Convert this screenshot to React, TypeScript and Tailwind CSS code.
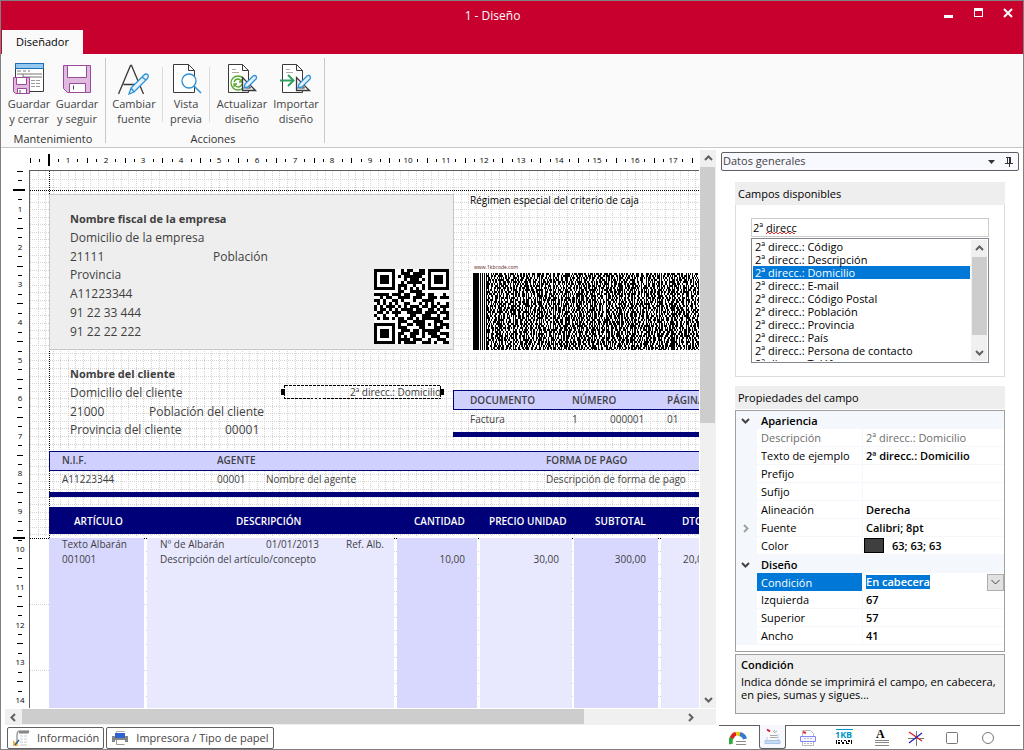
import { useLayoutEffect, useRef, useState } from 'react'
import type { ReactNode } from 'react'

// one centimetre on the design surface
const CM = 37.8

type Field = { x: number; y: number; text: string; style?: 'lg' | 'lgBold' | 'sm' | 'smBold' | 'white' | 'black'; right?: boolean }

const styles = {
  lg: 'text-[12px] leading-[18px] text-[#3f3f3f]',
  lgBold: 'text-[11px] leading-[18px] font-bold text-[#3f3f3f]',
  sm: 'text-[10px] leading-[15px] text-[#3f3f3f]',
  smBold: 'text-[10px] leading-[14px] font-semibold text-[#3f3f3f]',
  white: 'text-[10px] leading-[14px] font-semibold text-white',
  black: 'text-[10px] leading-[15px] text-black',
}

// x is the left edge (or the right edge when right is set), y the middle of the line
const fields: Field[] = [
  { x: 40, y: 47, text: 'Nombre fiscal de la empresa', style: 'lgBold' },
  { x: 40, y: 66, text: 'Domicilio de la empresa', style: 'lg' },
  { x: 40, y: 85, text: '21111', style: 'lg' },
  { x: 183, y: 85, text: 'Población', style: 'lg' },
  { x: 40, y: 103, text: 'Provincia', style: 'lg' },
  { x: 40, y: 122, text: 'A11223344', style: 'lg' },
  { x: 40, y: 141, text: '91 22 33 444', style: 'lg' },
  { x: 40, y: 160, text: '91 22 22 222', style: 'lg' },
  { x: 440, y: 30, text: 'Régimen especial del criterio de caja', style: 'black' },
  { x: 40, y: 202, text: 'Nombre del cliente', style: 'lgBold' },
  { x: 40, y: 221, text: 'Domicilio del cliente', style: 'lg' },
  { x: 40, y: 240, text: '21000', style: 'lg' },
  { x: 119, y: 240, text: 'Población del cliente', style: 'lg' },
  { x: 40, y: 258, text: 'Provincia del cliente', style: 'lg' },
  { x: 195, y: 258, text: '00001', style: 'lg' },
  { x: 440, y: 230, text: 'DOCUMENTO', style: 'smBold' },
  { x: 542, y: 230, text: 'NÚMERO', style: 'smBold' },
  { x: 637, y: 230, text: 'PÁGINA', style: 'smBold' },
  { x: 440, y: 249, text: 'Factura' },
  { x: 542, y: 249, text: '1' },
  { x: 580, y: 249, text: '000001' },
  { x: 637, y: 249, text: '01' },
  { x: 32, y: 290, text: 'N.I.F.', style: 'smBold' },
  { x: 187, y: 290, text: 'AGENTE', style: 'smBold' },
  { x: 516, y: 290, text: 'FORMA DE PAGO', style: 'smBold' },
  { x: 32, y: 309, text: 'A11223344' },
  { x: 187, y: 309, text: '00001' },
  { x: 236, y: 309, text: 'Nombre del agente' },
  { x: 516, y: 309, text: 'Descripción de forma de pago' },
  { x: 44, y: 351, text: 'ARTÍCULO', style: 'white' },
  { x: 206, y: 351, text: 'DESCRIPCIÓN', style: 'white' },
  { x: 384, y: 351, text: 'CANTIDAD', style: 'white' },
  { x: 459, y: 351, text: 'PRECIO UNIDAD', style: 'white' },
  { x: 565, y: 351, text: 'SUBTOTAL', style: 'white' },
  { x: 652, y: 351, text: 'DTO.', style: 'white' },
  { x: 32, y: 374, text: 'Texto Albarán' },
  { x: 130, y: 374, text: 'Nº de Albarán' },
  { x: 236, y: 374, text: '01/01/2013' },
  { x: 316, y: 374, text: 'Ref. Alb.' },
  { x: 32, y: 389, text: '001001' },
  { x: 130, y: 389, text: 'Descripción del artículo/concepto' },
  { x: 435, y: 389, text: '10,00', right: true },
  { x: 529, y: 389, text: '30,00', right: true },
  { x: 616, y: 389, text: '300,00', right: true },
  { x: 653, y: 389, text: '20,00' },
]

const bodyColumns = [
  { x: 19, w: 95, dark: true },
  { x: 117, w: 247, dark: false },
  { x: 367, w: 80, dark: true },
  { x: 450, w: 92, dark: false },
  { x: 544, w: 84, dark: true },
  { x: 631, w: 120, dark: false },
]

const availableFields = [
  'Código', 'Descripción', 'Domicilio', 'E-mail', 'Código Postal', 'Población',
  'Provincia', 'País', 'Persona de contacto', 'Teléfono',
]

const qrRows = [
  '1111111001011001101111111',
  '1000001001110111101000001',
  '1011101010111111001011101',
  '1011101000101110101011101',
  '1011101001011111001011101',
  '1000001011100100101000001',
  '1111111010101010101111111',
  '0000000011001111000000000',
  '1111101110110011101100010',
  '0010110011110111001110111',
  '1101001101000100111100000',
  '0101010100110001010101001',
  '1010111010101110110110111',
  '1011010101111011001101010',
  '0110101110011111011110111',
  '1001000100001100111001001',
  '0101101011011010111111011',
  '0000000011100111100011100',
  '1111111010011011101010111',
  '1000001011100001100011101',
  '1011101001110110111111000',
  '1011101011001110101110111',
  '1011101010101100100111001',
  '1000001011110111001001110',
  '1111111010111100111010011',
]

const qrPath = qrRows
  .map((row, y) => [...row].map((c, x) => (c === '1' ? `M${x * 3} ${y * 3}h3v3h-3z` : '')).join(''))
  .join('')

function buildBarcode() {
  let seed = 417
  const next = () => {
    seed = (seed + 0x6d2b79f5) | 0
    let t = Math.imul(seed ^ (seed >>> 15), 1 | seed)
    t = (t + Math.imul(t ^ (t >>> 7), 61 | t)) ^ t
    return ((t ^ (t >>> 14)) >>> 0) / 4294967296
  }
  let d = 'M0 0h6v77h-6zM7 0h1v77h-1zM9 0h1v77h-1zM11 0h1v77h-1z'
  for (let col = 0; col < 22; col++) {
    const start = 13 + Math.round(col * 13.3)
    d += `M${start} 0h1v77h-1z`
    for (let y = 0; y < 77; y += 2) {
      let x = start + 1 + Math.floor(next() * 2)
      while (x < start + 13) {
        const w = 1 + Math.floor(next() * 2.6)
        d += `M${x} ${y}h${w}v${y === 76 ? 1 : 2}h-${w}z`
        x += w + 1 + Math.floor(next() * 2)
      }
    }
  }
  return d
}

const barcodePath = buildBarcode()

function Ruler({ vertical = false }: { vertical?: boolean }) {
  const ref = useRef<SVGSVGElement>(null)
  const [length, setLength] = useState(0)

  useLayoutEffect(() => {
    const measure = () => {
      const box = ref.current?.getBoundingClientRect()
      if (box) setLength(vertical ? box.height : box.width)
    }
    measure()
    window.addEventListener('resize', measure)
    return () => window.removeEventListener('resize', measure)
  }, [vertical])

  const origin = vertical ? 1 : 29
  const big = vertical ? [20, 368] : [48]
  const marks: ReactNode[] = []
  const line = (key: string, pos: number, half: number, width = 1) =>
    vertical ? (
      <rect key={key} x={18 - half} y={pos} width={half * 2 + (half < 6 ? 1 : 0)} height={width} />
    ) : (
      <rect key={key} x={pos} y={12 - half} width={width} height={half * 2} />
    )
  for (let i = 0; origin + (i * CM) / 4 < length - 5; i++) {
    const pos = Math.round(origin + (i * CM) / 4)
    if (big.some((b) => Math.abs(b - pos) < 2)) continue
    if (i % 4 === 0 && i > 0) {
      marks.push(
        <text key={i} x={vertical ? 19 : pos} y={vertical ? pos + 3 : 15} textAnchor="middle" className="text-[8px]">
          {i / 4}
        </text>,
      )
    } else if (i % 2 === 0) {
      marks.push(line(`m${i}`, pos, 2.5))
    } else {
      marks.push(line(`s${i}`, pos, 1.5))
    }
  }
  return (
    <svg ref={ref} className={vertical ? 'h-full w-7 shrink-0' : 'h-[22px] w-full'} shapeRendering="crispEdges" aria-hidden="true">
      {marks}
      {big.map((b) => line(`b${b}`, b - 1, 6, 2))}
    </svg>
  )
}

function Grid() {
  return (
    <svg className="absolute inset-0 h-full w-full" shapeRendering="crispEdges" aria-hidden="true">
      <rect width="100%" height="100%" fill="#fff" />
      {Array.from({ length: 140 }, (_, i) => Math.round(i * 7.56)).map((x) => (
        <path key={x} d={`M${x + 0.5} 0V366`} stroke="#d4d4d4" strokeDasharray="1 1" />
      ))}
      {Array.from({ length: 48 }, (_, i) => Math.round(i * 7.56) + 8).map((y) => (
        <path key={y} d={`M0 ${y + 0.5}H2000`} stroke="#d4d4d4" strokeDasharray="1 1" />
      ))}
      <rect y="367" width="100%" height="1000" fill="#fff" />
      {Array.from({ length: 40 }, (_, i) => 367 + Math.round(i * 13.2)).map((y, i) => (
        <path key={y} d={`M${i % 5 === 0 ? 0 : 116} ${y + 0.5}H2000`} stroke="#d4d4d4" strokeDasharray="1 1" />
      ))}
      <path d="M0 19.5H2000M19.5 0V367M0 367.5H2000" stroke="#000" strokeDasharray="1 1" />
    </svg>
  )
}

function Chevron({ dir, className = '' }: { dir: 'up' | 'down' | 'left' | 'right'; className?: string }) {
  const d = { up: 'M1 6l3.5-3.5L8 6', down: 'M1 3l3.5 3.5L8 3', left: 'M6 1L2.5 4.5 6 8', right: 'M3 1l3.5 3.5L3 8' }[dir]
  return (
    <svg width="9" height="9" viewBox="0 0 9 9" fill="none" stroke="currentColor" strokeWidth="2" className={className} aria-hidden="true">
      <path d={d} />
    </svg>
  )
}

function SaveCloseIcon() {
  return (
    <svg width="32" height="32" viewBox="0 0 32 32" aria-hidden="true">
      <path d="M2.5 .5h28v28h-28z" fill="#fff" stroke="#3a3a3a" />
      <path d="M2.5 .5h28v5h-28z" fill="#94c8f0" stroke="#1a6fb5" />
      <path d="M4 8h4M10 8h3M15 8h2M4 11h25M10 11v3h19" fill="none" stroke="#777" />
      <path d="M18 17.5h4m1 0h4M18 20.5h4m1 0h4M18 23.5h4m1 0h4" stroke="#999" />
      <path d="M.5 14.5h16v16h-14l-2-2z" fill="#dfbade" stroke="#9b4a9b" />
      <path d="M3.5 14.5h10v7h-10zM4.5 25.5h9v5h-9z" fill="#fff" stroke="#9b4a9b" />
      <path d="M7 27v3" stroke="#555" />
    </svg>
  )
}

function SaveIcon() {
  return (
    <svg width="32" height="32" viewBox="0 0 32 32" aria-hidden="true">
      <path d="M2.5 2.5h27v27h-23l-4-4z" fill="#dfbade" stroke="#9b4a9b" />
      <path d="M6.5 2.5h19v12h-19zM8.5 20.5h16v9h-16z" fill="#fff" stroke="#9b4a9b" />
      <path d="M12.5 22.5v4" stroke="#444" />
    </svg>
  )
}

function FontIcon() {
  return (
    <svg width="32" height="32" viewBox="0 0 32 32" fill="none" aria-hidden="true">
      <path d="M.5 31L12.5 2.5h1L25.500 31M5.500 21.500h15" stroke="#3a3a3a" strokeWidth="1.300" />
      <path d="M11 31l2-6L26 12q2-2 4 0 1 2-1 4L16 29zM13 25l3 4M24 14l4 3" fill="#e2f1fc" stroke="#2f8fd3" strokeWidth="1.300" />
    </svg>
  )
}

function PreviewIcon() {
  return (
    <svg width="32" height="32" viewBox="0 0 32 32" fill="none" aria-hidden="true">
      <path d="M3.5 1.5h15l6 6v22h-21zM18.5 1.5v6h6" fill="#fff" stroke="#3a3a3a" />
      <circle cx="19" cy="18" r="7" fill="#fff" stroke="#2f8fd3" strokeWidth="1.300" />
      <path d="M24 23l7 7" stroke="#2f8fd3" strokeWidth="1.500" />
    </svg>
  )
}

function DesignPageIcon({ children }: { children: ReactNode }) {
  return (
    <svg width="32" height="32" viewBox="0 0 32 32" fill="none" aria-hidden="true">
      <path d="M2.5 1.5h14l6 6v22h-20zM16.5 1.5v6h6" fill="#fff" stroke="#3a3a3a" />
      <path d="M6 6.5h4M6 9.5h7" stroke="#aaa" />
      {children}
      <path d="M16.5 14.5v13h13z" fill="#f5f5f5" stroke="#3a3a3a" strokeWidth="1.300" />
      <path d="M19.5 20v5h5z" fill="#fff" stroke="#3a3a3a" />
      <path d="M18 25l1-4 8-8q2-1 3 0 1 2 0 3l-8 8z" fill="#e2f1fc" stroke="#2f8fd3" strokeWidth="1.300" />
    </svg>
  )
}

function RibbonButton({ icon, lines, className }: { icon: ReactNode; lines: [string, string]; className: string }) {
  return (
    <button type="button" className={`flex flex-col items-center leading-[15px] text-[#444] hover:bg-[#e8e8e8] ${className}`}>
      {icon}
      <span className="mt-px whitespace-nowrap">{lines[0]}</span>
      <span className="whitespace-nowrap">{lines[1]}</span>
    </button>
  )
}

function Ribbon() {
  return (
    <div className="flex h-[94px] shrink-0 border-b border-[#c8c8c8] bg-[#fafafa] pt-1 text-[11px] text-[#333]">
      <section className="flex flex-col justify-between pt-[5px] pr-1 pl-1">
        <div className="flex">
          <RibbonButton className="w-12" icon={<SaveCloseIcon />} lines={['Guardar', 'y cerrar']} />
          <RibbonButton className="w-12" icon={<SaveIcon />} lines={['Guardar', 'y seguir']} />
        </div>
        <h2 className="text-center leading-[16px]">Mantenimiento</h2>
      </section>
      <div className="mb-1 w-px bg-[#c8c8c8]" />
      <section className="flex flex-col justify-between pt-[5px] pr-1">
        <div className="flex">
          <RibbonButton className="w-14" icon={<FontIcon />} lines={['Cambiar', 'fuente']} />
          <div className="my-1 w-px bg-[#dcdcdc]" />
          <RibbonButton className="w-[46px]" icon={<PreviewIcon />} lines={['Vista', 'previa']} />
          <div className="my-1 w-px bg-[#dcdcdc]" />
          <RibbonButton
            className="ml-[2px] w-[60px]"
            icon={
              <DesignPageIcon>
                <circle cx="12" cy="20" r="7" fill="#fff" stroke="#55a82a" strokeWidth="1.300" />
                <path d="M8 19q1-3 4-3 2 0 3 2m1-2v3h-3M16 21q-1 3-4 3-2 0-3-2m-1 2v-3h3" stroke="#55a82a" strokeWidth="1.300" />
              </DesignPageIcon>
            }
            lines={['Actualizar', 'diseño']}
          />
          <RibbonButton
            className="w-12"
            icon={
              <DesignPageIcon>
                <path d="M0 17.5h13" stroke="#2fa060" strokeWidth="2" />
                <path d="M8 12l5.5 5.5L8 23" stroke="#2fa060" strokeWidth="2" />
              </DesignPageIcon>
            }
            lines={['Importar', 'diseño']}
          />
        </div>
        <h2 className="text-center leading-[16px]">Acciones</h2>
      </section>
      <div className="mb-1 w-px bg-[#c8c8c8]" />
    </div>
  )
}

function DesignSurface() {
  return (
    <div className="relative min-w-0 flex-1 overflow-hidden border-t border-l border-[#606060]">
      <Grid />
      <div className="absolute top-[23px] left-[19px] h-[156px] w-[405px] border border-[#c8c8c8] bg-[#eee]" />
      <svg className="absolute top-[98px] left-[344px]" width="75" height="75" shapeRendering="crispEdges" role="img" aria-label="QR">
        <path d="M0 0h75v75H0z" fill="#fff" />
        <path d={qrPath} />
      </svg>
      <div className="absolute top-[90px] right-0 left-[441px] h-[91px] bg-white" />
      <svg className="absolute top-[102px] left-[443px]" width="300" height="77" shapeRendering="crispEdges" role="img" aria-label="PDF417">
        <path d={barcodePath} />
      </svg>
      <span className="absolute top-[92px] left-[444px] text-[5px] leading-[8px] text-[#602020]">www.1kbcode.com</span>

      <div className="absolute top-[219px] right-[-2px] left-[423px] h-5 border border-[#000078] bg-[#d0d0ff]" />
      <div className="absolute top-[261px] right-0 left-[423px] h-[5px] bg-[#000078]" />
      <div className="absolute top-[280px] right-[-2px] left-[19px] h-5 border border-[#000078] bg-[#d0d0ff]" />
      <div className="absolute top-[321px] right-0 left-[19px] h-[5px] bg-[#000078]" />
      <div className="absolute top-[336px] right-0 left-[19px] h-[27px] bg-[#000078]" />
      {bodyColumns.map((col) => (
        <div
          key={col.x}
          className={`absolute top-[367px] bottom-0 ${col.dark ? 'bg-[#d8d8ff]' : 'bg-[#e8e8ff]'}`}
          style={{ left: col.x, width: col.w }}
        />
      ))}

      {fields.map((f) => (
        <span
          key={`${f.x}-${f.y}`}
          className={`absolute whitespace-nowrap ${styles[f.style ?? 'sm']} ${f.right ? '-translate-x-full' : ''}`}
          style={{ left: f.x, top: f.y - 8 }}
        >
          {f.text}
        </span>
      ))}

      <div className="absolute top-[214px] left-[254px] h-[14px] w-[157px] text-right text-[10px] leading-[14px] text-[#3f3f3f]">
        <svg className="absolute inset-0" width="157" height="14" shapeRendering="crispEdges" aria-hidden="true">
          <rect x=".5" y=".5" width="156" height="13" fill="none" stroke="#000" strokeDasharray="3 1" />
        </svg>
        <span className="relative">2ª direcc.: Domicilio</span>
        <i className="absolute top-[4px] -left-[3px] h-[6px] w-1 bg-black" />
        <i className="absolute top-[4px] -right-[3px] h-[6px] w-1 bg-black" />
      </div>
    </div>
  )
}

function Designer() {
  return (
    <main className="flex min-w-0 flex-1 flex-col">
      <div className="flex min-h-0 flex-1">
        <div className="mr-px flex min-w-0 flex-1 flex-col">
          <Ruler />
          <div className="flex min-h-0 flex-1">
            <Ruler vertical />
            <DesignSurface />
          </div>
        </div>
        <div className="mt-[2px] mr-[3px] flex w-4 shrink-0 flex-col items-center bg-[#f0f0f0] text-[#606060]">
          <button type="button" aria-label="Subir" className="grid h-[17px] place-items-center"><Chevron dir="up" /></button>
          <div className="mr-px h-64 w-[15px] bg-[#cdcdcd]" />
          <button type="button" aria-label="Bajar" className="mt-auto grid h-[17px] place-items-center"><Chevron dir="down" /></button>
        </div>
      </div>
      <div className="mt-px mr-[3px] ml-1 flex h-4 items-center bg-[#f0f0f0] pr-[17px] text-[#606060]">
        <button type="button" aria-label="Izquierda" className="grid w-[17px] place-items-center"><Chevron dir="left" /></button>
        <div className="mb-px h-[15px] w-[81%] bg-[#cdcdcd]" />
        <button type="button" aria-label="Derecha" className="ml-auto grid w-[17px] place-items-center"><Chevron dir="right" /></button>
      </div>
      <div className="mt-[2px] ml-[6px] flex h-[22px] gap-[2px] text-[11px] text-[#444]">
        <button type="button" className="flex items-center gap-[7px] rounded-[2px] border border-[#606060] pr-1 pl-[5px] whitespace-nowrap">
          <svg width="17" height="17" viewBox="0 0 17 17" fill="none" aria-hidden="true">
            <path d="M4 14V4q0-3 2-3h10l-1 2H6" fill="#f0f0f0" stroke="#777" />
            <path d="M6 1h10v2H6z" fill="#888" />
            <path d="M7 6h3m1 0h3M7 9h3m1 0h3M7 12h3m1 0h3M7 15h7" stroke="#ccc" />
            <path d="M0 10v6h6z" fill="#f0b840" />
            <path d="M2 15l4-5" stroke="#28618f" strokeWidth="1.500" />
          </svg>
          Información
        </button>
        <button type="button" className="flex items-center gap-[7px] rounded-[2px] border border-[#606060] pr-1 pl-[5px] whitespace-nowrap">
          <svg width="17" height="16" viewBox="0 0 17 16" fill="none" aria-hidden="true">
            <path d="M0 6h16v6H0z" fill="#858585" />
            <path d="M4.5 4V1.5h8" stroke="#aaa" />
            <path d="M3 3h10v5H3z" fill="#2d62d0" />
            <path d="M3 10h10v5H3z" fill="#fff" />
            <path d="M4.5 10v4.5h8" stroke="#999" />
          </svg>
          Impresora / Tipo de papel
        </button>
      </div>
    </main>
  )
}

function FieldList() {
  return (
    <section>
      <h2 className="h-[23px] bg-[#eee] px-[3px] text-[11px] leading-[23px]">
        <label htmlFor="campo">Campos disponibles</label>
      </h2>
      <div className="border border-t-0 border-[#dcdcdc] px-[15px] pt-[13px] pb-[13px]">
        <div className="relative">
          <input
            id="campo"
            defaultValue="2ª direcc"
            spellCheck={false}
            className="block h-[19px] w-full border border-[#ccc] px-px text-[11px] outline-none"
          />
          <svg className="absolute top-[13px] left-[15px]" width="31" height="4" fill="none" aria-hidden="true">
            <path d="M0 3l2-2 2 2 2-2 2 2 2-2 2 2 2-2 2 2 2-2 2 2 2-2 2 2 2-2 2 2 1-1" stroke="#e00000" strokeWidth=".8" />
          </svg>
        </div>
        <div className="mt-px flex h-[125px] border border-[#828790] p-px">
          <ul role="listbox" aria-label="Campos disponibles" className="mr-px flex-1 overflow-hidden text-[11px] leading-[13px]">
            {availableFields.map((name) => (
              <li
                key={name}
                role="option"
                aria-selected={name === 'Domicilio'}
                className={name === 'Domicilio' ? 'bg-[#0078d7] px-[2px] text-white' : 'px-[2px]'}
              >
                2ª direcc.: {name}
              </li>
            ))}
          </ul>
          <div className="flex w-4 flex-col items-center bg-[#f0f0f0] text-[#606060]">
            <button type="button" aria-label="Subir" className="grid h-[17px] place-items-center"><Chevron dir="up" /></button>
            <div className="h-[78px] w-[15px] bg-[#cdcdcd]" />
            <button type="button" aria-label="Bajar" className="mt-auto grid h-[17px] place-items-center"><Chevron dir="down" /></button>
          </div>
        </div>
      </div>
    </section>
  )
}

function PropertyRow({ name, value, muted, expandable }: { name: string; value?: ReactNode; muted?: boolean; expandable?: boolean }) {
  return (
    <tr className="h-[18px]">
      <td className="w-[21px] bg-[#f4f7fc] p-0 text-[#a0a0a0]">{expandable && <Chevron dir="right" className="ml-[5px]" />}</td>
      <th scope="row" className={`w-[106px] border-r border-b border-[#f4f7fc] p-0 pl-1 text-left font-normal ${muted ? 'text-[#6d6d6d]' : ''}`}>
        {name}
      </th>
      <td className={`border-b border-[#f4f7fc] p-0 pl-[3px] ${muted ? 'text-[#6d6d6d]' : 'font-semibold'}`}>{value}</td>
    </tr>
  )
}

function PropertyGroup({ name }: { name: string }) {
  return (
    <tr className="h-[18px] bg-[#f4f7fc]">
      <td className="p-0 text-[#444]"><Chevron dir="down" className="ml-[5px]" /></td>
      <th scope="colgroup" colSpan={2} className="p-0 pl-1 text-left font-semibold">{name}</th>
    </tr>
  )
}

function PropertyGrid() {
  return (
    <section className="mt-[9px]">
      <h2 className="h-[23px] bg-[#eee] px-[3px] text-[11px] leading-[23px]">Propiedades del campo</h2>
      <div className="mt-px border border-[#a0a0a0] pb-[6px]">
        <table className="w-full table-fixed border-separate border-spacing-0 text-[11px] leading-[17px]">
          <colgroup>
            <col className="w-[21px]" />
            <col className="w-[106px]" />
            <col />
          </colgroup>
          <tbody>
            <PropertyGroup name="Apariencia" />
            <PropertyRow name="Descripción" value="2ª direcc.: Domicilio" muted />
            <PropertyRow name="Texto de ejemplo" value="2ª direcc.: Domicilio" />
            <PropertyRow name="Prefijo" />
            <PropertyRow name="Sufijo" />
            <PropertyRow name="Alineación" value="Derecha" />
            <PropertyRow name="Fuente" value="Calibri; 8pt" expandable />
            <PropertyRow
              name="Color"
              value={
                <span className="flex items-center gap-2">
                  <i className="-ml-[2px] h-[15px] w-5 border border-black bg-[#3f3f3f]" />
                  63; 63; 63
                </span>
              }
            />
            <PropertyGroup name="Diseño" />
            <tr className="h-[18px]">
              <td className="bg-[#f4f7fc] p-0" />
              <th scope="row" className="border-r border-white bg-[#0078d7] p-0 pl-1 text-left font-normal text-white">
                <label htmlFor="condicion">Condición</label>
              </th>
              <td className="p-0 pl-[3px]">
                <div className="flex h-[18px] items-center justify-between">
                  <select id="condicion" className="h-[14px] appearance-none bg-[#0078d7] p-0 leading-[14px] font-semibold text-white outline-none">
                    <option>En cabecera</option>
                  </select>
                  <span className="grid h-[17px] w-[17px] place-items-center border border-[#adadad] bg-[#e1e1e1] text-[#444]">
                    <svg width="9" height="6" fill="none" stroke="currentColor" aria-hidden="true"><path d="M.5 1l4 4 4-4" /></svg>
                  </span>
                </div>
              </td>
            </tr>
            <PropertyRow name="Izquierda" value="67" />
            <PropertyRow name="Superior" value="57" />
            <PropertyRow name="Ancho" value="41" />
          </tbody>
        </table>
      </div>
      <div className="mt-[2px] h-[60px] border border-[#a0a0a0] bg-[#f0f0f0] px-[5px] pt-px text-[11px] leading-[13px]">
        <h3 className="leading-[17px] font-semibold">Condición</h3>
        <p className="mt-[2px]">Indica dónde se imprimirá el campo, en cabecera, en pies, sumas y sigues...</p>
      </div>
    </section>
  )
}

const sideTabs: { label: string; icon: ReactNode }[] = [
  {
    label: 'General',
    icon: (
      <>
        <path d="M2 15q-1-4 1-7" stroke="#2eaa3c" strokeWidth="4" />
        <path d="M3 9q1-4 4-4" stroke="#e02020" strokeWidth="4" />
        <path d="M7 5q3-1 5 1" stroke="#f0c818" strokeWidth="4" />
        <path d="M11 5q4 1 5 5" stroke="#3579c8" strokeWidth="4" />
        <path d="M7 12.5h10M7 15.5h10" stroke="#888" />
      </>
    ),
  },
  {
    label: 'Datos generales',
    icon: (
      <>
        <path d="M4 1.500h8l2 3V11H4z" fill="#fafafa" />
        <path d="M3 1.500l3 2" stroke="#d02030" strokeWidth="2" />
        <path d="M9 4l2-2M10 5l3-2M6 7.500h7M6 9.500h7" stroke="#a8a8a8" />
        <path d="M1 12.500h15v3H1z" fill="#c5daf0" stroke="#a9c6e6" />
        <path d="M3 12V9M14 12V6" stroke="#b5cde8" />
      </>
    ),
  },
  {
    label: 'Cabecera',
    icon: (
      <>
        <path d="M3.5 16.500V1.500h8l3 3v12z" fill="#fff" stroke="#bbb" />
        <path d="M4 3l3 1" stroke="#e03030" strokeWidth="2" />
        <path d="M1.500 7.500h15v5h-15z" fill="#f4f4ff" stroke="#8585f5" />
        <path d="M5 9.500h8M5 14.500h8" stroke="#bbb" strokeDasharray="2 1" />
      </>
    ),
  },
  { label: '1KB', icon: null },
  { label: 'Texto', icon: null },
  {
    label: 'Línea',
    icon: (
      <>
        <path d="M1 9.5h16M9.5 2v15" stroke="#777" />
        <path d="M2 3l13 9" stroke="#e02020" strokeWidth="1.300" />
        <path d="M2 14L15 4" stroke="#2222c8" strokeWidth="1.300" />
      </>
    ),
  },
  { label: 'Rectángulo', icon: <rect x="3.5" y="3.5" width="11" height="11" rx="1" stroke="#777" /> },
  { label: 'Elipse', icon: <circle cx="9" cy="9" r="5.500" stroke="#777" /> },
]

function SideTabs() {
  return (
    <nav className="mt-auto mr-[3px] flex h-6 border-t border-[#606060]">
      {sideTabs.map((tab) => (
        <button
          key={tab.label}
          type="button"
          aria-label={tab.label}
          className={
            tab.label === 'Datos generales'
              ? '-mt-px mr-[3px] ml-1 grid w-[27px] place-items-center rounded-b-[3px] border border-t-0 border-[#606060] bg-[#f7f8fd]'
              : 'ml-px grid w-[35px] place-items-center'
          }
        >
          {tab.label === '1KB' ? (
            <svg width="20" height="18" viewBox="0 0 20 18" fill="none" aria-hidden="true">
              <path d="M2 .5h17" stroke="#0098c8" />
              <text x="1" y="9" className="fill-[#0098c8] text-[9px] font-bold">1KB</text>
              <path d="M2 11h1v4H2zM4 11h2v1H4zM4 13h2v2H4zM7 11h1v2H7zM8 13h2v2H8zM10 11h2v1h-2zM12 12h1v3h-1zM14 11h2v2h-2zM13 14h2v1h-2zM17 11h1v4h-1z" fill="#000" />
            </svg>
          ) : tab.label === 'Texto' ? (
            <svg width="18" height="18" viewBox="0 0 18 18" fill="none" aria-hidden="true">
              <text x="5" y="9" className="fill-black font-['Liberation_Serif',serif] text-[12px] font-bold">A</text>
              <path d="M4 11.5h14M4 13.5h14M4 16.5h14" stroke="#888" />
            </svg>
          ) : (
            <svg width="18" height="18" viewBox="0 0 18 18" fill="none" aria-hidden="true">{tab.icon}</svg>
          )}
        </button>
      ))}
    </nav>
  )
}

function SidePanel() {
  return (
    <aside className="flex w-[304px] shrink-0 flex-col pt-1">
      <div className="mr-1 ml-[2px] flex h-[19px] items-center rounded-[2px] border border-[#606060] bg-[#f8f8ff] pr-[5px] pl-px text-[11px] text-[#444]">
        <h1 className="flex-1">Datos generales</h1>
        <svg width="7" height="4" className="mr-[10px]" aria-hidden="true"><path d="M0 0h7L3.500 4z" fill="#333" /></svg>
        <svg width="8" height="10" fill="none" stroke="#333" shapeRendering="crispEdges" aria-hidden="true">
          <path d="M2.5 0v6M1 .5h5M0 6.5h8M4 7v3" />
          <path d="M5 0v6" strokeWidth="2" />
        </svg>
      </div>
      <div className="mt-[11px] mr-[18px] ml-4 text-black">
        <FieldList />
        <PropertyGrid />
      </div>
      <SideTabs />
    </aside>
  )
}

export default function App() {
  return (
    <div className="flex h-screen min-h-[750px] flex-col border border-[#808080] bg-white font-['Open_Sans',sans-serif]">
      <header className="flex h-[53px] shrink-0 flex-col justify-between bg-[#c8002d] text-white">
        <div className="flex h-[29px] items-center pr-[10px]">
          <h1 className="flex-1 pl-10 text-center text-[12px]">1 - Diseño</h1>
          <button type="button" aria-label="Minimizar" className="mr-[21px] mb-[6px] flex h-[10px] w-[9px] items-end"><i className="h-[3px] w-full bg-white" /></button>
          <button type="button" aria-label="Maximizar" className="mr-5 mb-[6px] h-[9px] w-[9px] border border-t-[3px] border-white" />
          <button type="button" aria-label="Cerrar" className="mb-[6px]">
            <svg width="10" height="10" stroke="currentColor" strokeWidth="2" aria-hidden="true"><path d="M1 1l8 8M9 1L1 9" /></svg>
          </button>
        </div>
        <div className="flex pl-px">
          <button type="button" className="h-6 w-[81px] bg-[#fafafa] text-[11px] text-black">Diseñador</button>
        </div>
      </header>
      <Ribbon />
      <div className="flex min-h-0 flex-1">
        <Designer />
        <SidePanel />
      </div>
    </div>
  )
}
